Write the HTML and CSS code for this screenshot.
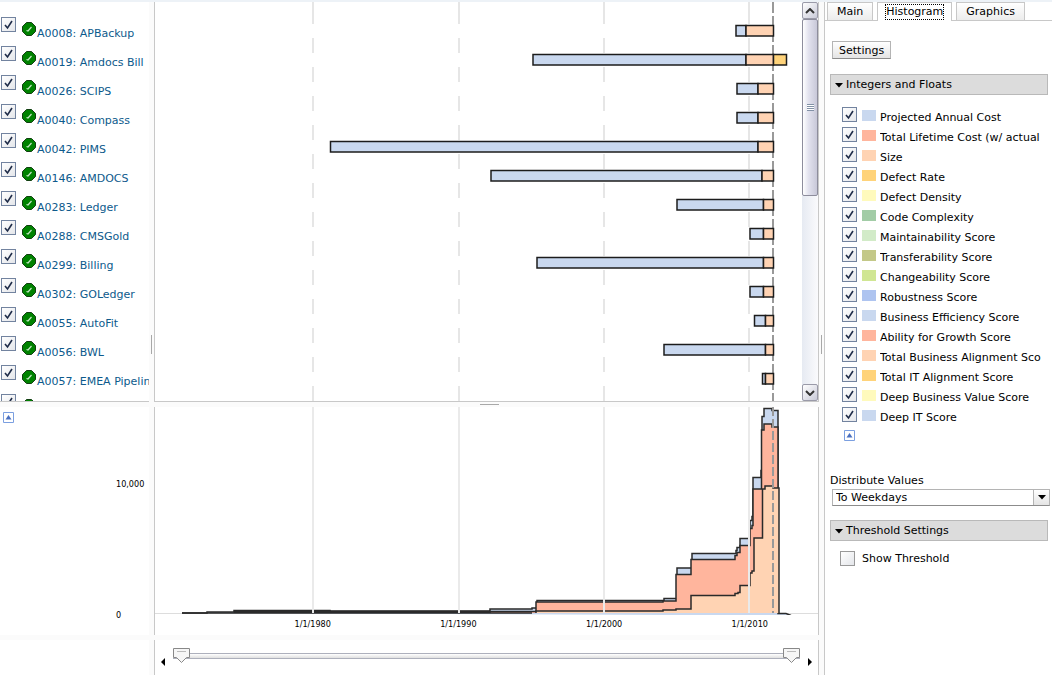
FILE: index.html
```
<!DOCTYPE html>
<html lang="en">
<head>
<meta charset="utf-8">
<title>Portfolio Timeline</title>
<link rel="stylesheet" href="styles.css">
</head>
<body>
<svg class="defs" aria-hidden="true">
  <symbol id="ok" viewBox="0 0 14 14">
    <path d="M4.500.5h5L13.500 4.500v5L9.500 13.500h-5L.5 9.500v-5z" fill="#008200" stroke="#123f12"/>
    <path d="M4.500 8.500l1.500.5L9.500 5" fill="none" stroke="#c4e6c4" stroke-width="1.200"/>
  </symbol>
  <symbol id="up" viewBox="0 0 11 11">
    <path d="M.5.5h10v10H.5z" fill="#fff" stroke="#7b9fe0"/>
    <path d="M5.500 3L8.500 7.500h-6z" fill="#4a70c0"/>
  </symbol>
  <symbol id="fold" viewBox="0 0 8 5"><path d="M0 0h8L4 4.500z" fill="#000"/></symbol>
</svg>
<div class="app">
  <main class="board">
    <ul class="apps pane">
      <li><input type="checkbox" checked aria-label="A0008"><svg class="ok"><use href="#ok"/></svg><a href="#">A0008: APBackup</a></li>
      <li><input type="checkbox" checked aria-label="A0019"><svg class="ok"><use href="#ok"/></svg><a href="#">A0019: Amdocs Bill</a></li>
      <li><input type="checkbox" checked aria-label="A0026"><svg class="ok"><use href="#ok"/></svg><a href="#">A0026: SCIPS</a></li>
      <li><input type="checkbox" checked aria-label="A0040"><svg class="ok"><use href="#ok"/></svg><a href="#">A0040: Compass</a></li>
      <li><input type="checkbox" checked aria-label="A0042"><svg class="ok"><use href="#ok"/></svg><a href="#">A0042: PIMS</a></li>
      <li><input type="checkbox" checked aria-label="A0146"><svg class="ok"><use href="#ok"/></svg><a href="#">A0146: AMDOCS</a></li>
      <li><input type="checkbox" checked aria-label="A0283"><svg class="ok"><use href="#ok"/></svg><a href="#">A0283: Ledger</a></li>
      <li><input type="checkbox" checked aria-label="A0288"><svg class="ok"><use href="#ok"/></svg><a href="#">A0288: CMSGold</a></li>
      <li><input type="checkbox" checked aria-label="A0299"><svg class="ok"><use href="#ok"/></svg><a href="#">A0299: Billing</a></li>
      <li><input type="checkbox" checked aria-label="A0302"><svg class="ok"><use href="#ok"/></svg><a href="#">A0302: GOLedger</a></li>
      <li><input type="checkbox" checked aria-label="A0055"><svg class="ok"><use href="#ok"/></svg><a href="#">A0055: AutoFit</a></li>
      <li><input type="checkbox" checked aria-label="A0056"><svg class="ok"><use href="#ok"/></svg><a href="#">A0056: BWL</a></li>
      <li><input type="checkbox" checked aria-label="A0057"><svg class="ok"><use href="#ok"/></svg><a href="#">A0057: EMEA Pipelin</a></li>
      <li><input type="checkbox" checked aria-label="Next application"><svg class="ok"><use href="#ok"/></svg></li>
    </ul>
    <div class="split-v"><i></i></div>
    <section class="gantt pane framed">
      <svg class="gantt-plot" viewBox="155 2 647 399" preserveAspectRatio="none">
        <g stroke="#e6e6e6" stroke-width="2">
          <path d="M313 2V24M459 2V24M604 2V24M749 2V24"/>
          <path d="M313 38V401M459 38V401M604 38V401M749 38V401" stroke-dasharray="15 14"/>
        </g>
        <path d="M773 2V401" stroke="#999" stroke-width="2" stroke-dasharray="26 3" stroke-dashoffset="15"/>
        <g stroke="#1c1c1c" stroke-width="1.500" fill="#c9d8ef">
          <path d="M736 25.500h10v10.500h-10zM533 54.500h213v10.500H533zM737 83.500h21v10.500h-21zM737 112.500h21v10.500h-21zM330.500 141.500H758v10.500H330.500zM491 170.500h271v10.500H491zM677 199.500h86.500v10.500H677zM750 228.500h13.500v10.500H750zM537 257.500h226.500v10.500H537zM750 286.500h13.500v10.500H750zM754.500 315.500h11v10.500h-11zM664 344.500h101.500v10.500H664zM762.500 373.500h3v10.500h-3z"/>
          <path fill="#ffd3b3" d="M746 25.500h27.500v10.500H746zM746 54.500h27.500v10.500H746zM758 83.500h15.500v10.500H758zM758 112.500h15.500v10.500H758zM758 141.500h15.500v10.500H758zM762 170.500h11.500v10.500H762zM763.500 199.500h10v10.500h-10zM763.500 228.500h10v10.500h-10zM763.500 257.500h10v10.500h-10zM763.500 286.500h10v10.500h-10zM765.500 315.500h8v10.500h-8zM765.500 344.500h8v10.500h-8zM765.500 373.500h8v10.500h-8z"/>
          <path fill="#ffd37a" d="M773.500 54.500h13v10.500h-13z"/>
        </g>
      </svg>
      <div class="scroll">
        <button class="scroll-btn" aria-label="Scroll up"><svg viewBox="0 0 10 6"><path d="M1 5l4-4 4 4" fill="none" stroke="#333" stroke-width="2"/></svg></button>
        <div class="scroll-thumb"><i></i></div>
        <button class="scroll-btn scroll-down" aria-label="Scroll down"><svg viewBox="0 0 10 6"><path d="M1 1l4 4 4-4" fill="none" stroke="#333" stroke-width="2"/></svg></button>
      </div>
    </section>
    <div class="split-v"><i></i></div>

    <div class="split-h"><i></i></div>

    <section class="scale">
      <button class="bare" aria-label="Collapse chart"><svg class="up"><use href="#up"/></svg></button>
      <div class="ticks"><span>10,000</span><span>0</span></div>
    </section>
    <div class="gutter"></div>
    <section class="histogram framed">
      <svg class="hist-plot" viewBox="155 407 663 208" preserveAspectRatio="none">
        <path d="M155 613.500H818" stroke="#ddd"/>
        <g stroke="#2a2a2a" stroke-width="1.500" stroke-linejoin="miter">
          <path fill="#c9d8ef" d="M182 613h25v-1h27v-1.500h96v.5h160v-2h42v-1h5v-7.500h127v-2h13v-30.500h15v-14.500h44v-3h1v-3h3v-9h10v-18h2v-4h1v-39h8v-7h1v-54h2v-8h8v2h6v203h8l5 2z" stroke="none"/>
          <path fill="none" d="M182 613h25v-1h27v-1.500h96v.5h160v-2h42v-1h5v-7.500h127v-2h13v-30.500h15v-14.500h44v-3h1v-3h3v-9h10v-18h2v-4h1v-39h8v-7h1v-54h2v-8h8v2h6v203h8l5 2"/>
          <path fill="#ffb59d" d="M490 613v-1.500h46v-9.500h127v-1h13v-26.500h15v-15h44v-4h2v-3h3v-7h10v-17h2v-3h1v-36.500h8.500V430h2.500v-6h8v3h6v186"/>
          <path fill="#ffd3b3" d="M536 613v-2h127v-1h13v-1h15v-13.500h44v-2h3v-1h2v-7h10V573h2v-2h2v-33h8.500V489h2.500v-3h8v2h6v125"/>
          <path d="M182 613h350M234 611.500h256" fill="none"/>
        </g>
        <path d="M313 407V613M459 407V613M604 407V613M749 407V613" stroke="#eaeaea" stroke-width="2"/>
        <path d="M773 407V613" stroke="#999" stroke-width="2" stroke-dasharray="9 3"/>
      </svg>
      <div class="dates"><span>1/1/1980</span><span>1/1/1990</span><span>1/1/2000</span><span>1/1/2010</span></div>
    </section>
    <div class="gutter"></div>

    <div class="gutter row-gap"></div>

    <div></div>
    <div class="gutter"></div>
    <section class="range framed">
      <button class="bare" aria-label="Earlier"><svg class="step" viewBox="0 0 4 8"><path d="M4 0v8L0 4z"/></svg></button>
      <div class="track">
        <input type="range" min="0" max="100" value="0" aria-label="Range start">
        <input type="range" min="0" max="100" value="100" aria-label="Range end">
      </div>
      <button class="bare" aria-label="Later"><svg class="step" viewBox="0 0 4 8"><path d="M0 0v8l4-4z"/></svg></button>
    </section>
    <div class="gutter"></div>
  </main>

  <aside class="side">
    <nav class="tabs">
      <button>Main</button><button class="active"><span>Histogram</span></button><button>Graphics</button>
    </nav>
    <button class="settings">Settings</button>
    <h2><svg class="fold"><use href="#fold"/></svg>Integers and Floats</h2>
    <div class="series">
      <label><input type="checkbox" checked><i class="blue"></i><span>Projected Annual Cost</span></label>
      <label><input type="checkbox" checked><i class="salmon"></i><span>Total Lifetime Cost (w/ actual</span></label>
      <label><input type="checkbox" checked><i class="peach"></i><span>Size</span></label>
      <label><input type="checkbox" checked><i class="gold"></i><span>Defect Rate</span></label>
      <label><input type="checkbox" checked><i class="lemon"></i><span>Defect Density</span></label>
      <label><input type="checkbox" checked><i class="green"></i><span>Code Complexity</span></label>
      <label><input type="checkbox" checked><i class="mint"></i><span>Maintainability Score</span></label>
      <label><input type="checkbox" checked><i class="olive"></i><span>Transferability Score</span></label>
      <label><input type="checkbox" checked><i class="lime"></i><span>Changeability Score</span></label>
      <label><input type="checkbox" checked><i class="azure"></i><span>Robustness Score</span></label>
      <label><input type="checkbox" checked><i class="blue"></i><span>Business Efficiency Score</span></label>
      <label><input type="checkbox" checked><i class="salmon"></i><span>Ability for Growth Score</span></label>
      <label><input type="checkbox" checked><i class="peach"></i><span>Total Business Alignment Sco</span></label>
      <label><input type="checkbox" checked><i class="gold"></i><span>Total IT Alignment Score</span></label>
      <label><input type="checkbox" checked><i class="lemon"></i><span>Deep Business Value Score</span></label>
      <label><input type="checkbox" checked><i class="blue"></i><span>Deep IT Score</span></label>
      <button class="bare" aria-label="Collapse list"><svg class="up"><use href="#up"/></svg></button>
    </div>
    <label class="caption" for="distribute">Distribute Values</label>
    <div class="combo">
      <select id="distribute"><option>To Weekdays</option></select>
      <span class="combo-arrow"><svg class="fold"><use href="#fold"/></svg></span>
    </div>
    <h2><svg class="fold"><use href="#fold"/></svg>Threshold Settings</h2>
    <label class="threshold"><input type="checkbox"><span>Show Threshold</span></label>
  </aside>
</div>
</body>
</html>
```
FILE: styles.css
```
* { box-sizing: border-box; }
body {
  margin: 0;
  background: #fff;
  color: #000;
  font: 11px/14px Verdana, "DejaVu Sans", sans-serif;
}
button, select { font: inherit; color: inherit; }
.defs { position: absolute; width: 0; height: 0; }
.app {
  display: flex;
  min-height: 100vh;
  border-top: 2px solid #edf2f7;
}
.board {
  flex: 1;
  min-width: 0;
  display: grid;
  grid-template-columns: 149px 5px minmax(0, 1fr) 5px;
  grid-template-rows: 400px 5px 228px 5px 1fr;
}
.pane { border-bottom: 1px solid #c8c8c8; overflow: hidden; }
.framed { border-left: 1px solid #c8c8c8; border-right: 1px solid #c8c8c8; }
.split-v, .split-h {
  background: #fbfbfb;
  display: flex;
  align-items: center;
  justify-content: center;
}
.split-v i { width: 1px; height: 19px; background: #a8a8a8; margin-top: 284px; }
.split-h { grid-column: 1 / -1; padding-left: 154px; }
.split-h i { width: 19px; height: 1px; background: #a8a8a8; }
.gutter { background: #fbfbfb; }
.row-gap { grid-column: 1 / -1; }

input[type="checkbox"] {
  appearance: none;
  flex: none;
  width: 15px;
  height: 15px;
  margin: 0;
  border: 1px solid #72839f;
  background: linear-gradient(135deg, #fff, #e4e6ea);
}
input[type="checkbox"]:checked {
  background: url("data:image/svg+xml,%3Csvg xmlns='http://www.w3.org/2000/svg' viewBox='0 0 13 13'%3E%3Cpath d='M3 7l2.500 3L10 3' fill='none' stroke='%231f2c48' stroke-width='1.600'/%3E%3C/svg%3E"), linear-gradient(135deg, #fff, #e4e6ea);
}

.apps { list-style: none; margin: 0; padding: 15px 0 0 1px; }
.apps li { display: flex; height: 29px; white-space: nowrap; overflow: hidden; }
.apps a { margin: 10px 0 0 1px; color: #0d5a8c; text-decoration: none; }
.ok { flex: none; width: 14px; height: 14px; margin: 5px 0 0 6px; }

.gantt { display: flex; }
.gantt-plot { flex: 1; min-width: 0; height: 399px; }
.scroll {
  width: 16px;
  display: flex;
  flex-direction: column;
  background: linear-gradient(90deg, #e6eaf2, #fafafc);
}
.scroll-btn {
  height: 17px;
  padding: 0;
  border: 1px solid #9a9aa8;
  border-radius: 2px;
  background: linear-gradient(135deg, #fff, #c9cad8);
  display: flex;
  align-items: center;
  justify-content: center;
}
.scroll-btn svg { width: 10px; height: 6px; }
.scroll-down { margin-top: auto; }
.scroll-thumb {
  height: 177px;
  border: 1px solid #8d8d9c;
  border-radius: 2px;
  background: linear-gradient(90deg, #fff, #e2e2ee 40%, #c8c8d8);
  display: flex;
  align-items: center;
  justify-content: center;
}
.scroll-thumb i {
  width: 7px;
  height: 7px;
  background: repeating-linear-gradient(#8291a6 0 1px, #fff 1px 2px);
}

.bare { padding: 0; border: 0; background: none; display: block; }
.up { display: block; width: 11px; height: 11px; }
.scale { display: flex; align-items: flex-start; padding: 5px 0 0 3px; }
.ticks {
  margin-left: 102px;
  padding-top: 67px;
  height: 208px;
  display: flex;
  flex-direction: column;
  justify-content: space-between;
}
.ticks, .dates { font: 9px/10px Tahoma, "DejaVu Sans Condensed", "DejaVu Sans", sans-serif; }
.hist-plot { display: block; width: 100%; height: 208px; }
.dates {
  display: grid;
  grid-template-columns: repeat(4, 25.2%);
  padding: 4px 0 0 12.8%;
  text-align: center;
}

.range { display: flex; align-items: flex-start; padding: 0 6px; }
.range .bare { margin-top: 18px; }
.step { display: block; width: 4px; height: 8px; }
.track {
  flex: 1;
  display: grid;
  margin: 13px 8px 0;
  height: 6px;
  border: 1px solid #adb0bc;
  border-width: 1px 0;
  background: linear-gradient(#fff, #e0e0e0);
}
.track input {
  grid-area: 1 / 1;
  appearance: none;
  width: 100%;
  height: 16px;
  margin: -6px 0 0;
  background: none;
  pointer-events: none;
}
.track input::-webkit-slider-thumb {
  appearance: none;
  pointer-events: auto;
  width: 17px;
  height: 16px;
  background: url("data:image/svg+xml,%3Csvg xmlns='http://www.w3.org/2000/svg' viewBox='0 0 17 16'%3E%3Cpath d='M.5.5h16v9h-3L8.500 14.500 3.500 9.500h-3z' fill='%23f6f6f6' stroke='%23888'/%3E%3Cpath d='M4 3.500h9' stroke='%23bbb'/%3E%3C/svg%3E");
}

.side {
  width: 228px;
  border-left: 1px solid #c8c8c8;
  overflow: hidden;
}
.tabs {
  display: flex;
  gap: 4px;
  padding-left: 2px;
  border-bottom: 1px solid #c8c8c8;
}
.tabs button {
  height: 18px;
  padding: 1px 9px 0;
  border: 1px solid #c8c8c8;
  border-bottom: 0;
  background: linear-gradient(#fff, #ececec);
}
.tabs .active { height: 19px; margin-bottom: -1px; padding: 0 8px; background: #fff; }
.tabs .active span { display: block; outline: 1px dotted #000; line-height: 14px; }
.settings {
  display: block;
  height: 18px;
  margin: 20px 0 15px 7px;
  padding: 1px 6px 0;
  border: 1px solid #b4b4b4;
  border-bottom-color: #8c8c8c;
  background: linear-gradient(#fff, #e4e4e4);
  line-height: 14px;
}
.side h2 {
  display: flex;
  align-items: center;
  gap: 3px;
  height: 21px;
  margin: 0 4px 0 5px;
  padding: 1px 4px 0;
  border: 1px solid #b9b9b9;
  background: #dcdcdc;
  font: inherit;
}
.fold { width: 8px; height: 5px; }
.series { padding: 12px 4px 0 17px; }
.series label { display: flex; height: 20px; }
.series i { flex: none; width: 14px; height: 11px; margin: 3px 4px 0 5px; }
.series span { flex: 1; min-width: 0; margin-top: 4px; overflow: hidden; white-space: nowrap; }
.series .bare { margin: 3px 0 0 2px; }
.blue { background: #c9d8ef; }
.salmon { background: #ffb59d; }
.peach { background: #ffd3b3; }
.gold { background: #ffd37a; }
.lemon { background: #fffabd; }
.green { background: #a2cca6; }
.mint { background: #d2ebc8; }
.olive { background: #c3c888; }
.lime { background: #d0e693; }
.azure { background: #aec4f0; }
.caption { display: block; margin: 33px 0 1px 5px; }
.combo { position: relative; margin: 0 2px 14px 7px; }
.combo select {
  display: block;
  width: 100%;
  height: 17px;
  padding: 1px 3px 0;
  border: 1px solid #b4b4b4;
  border-bottom-color: #8c8c8c;
  border-radius: 0;
  appearance: none;
  background: #fff;
}
.combo-arrow {
  position: absolute;
  top: 1px;
  right: 1px;
  width: 16px;
  height: 15px;
  border-left: 1px solid #b4b4b4;
  background: linear-gradient(#fff, #e4e4e4);
  display: flex;
  align-items: center;
  justify-content: center;
  pointer-events: none;
}
.threshold { display: flex; gap: 7px; margin: 10px 0 0 15px; }
.threshold span { margin-top: 1px; }
.threshold input[type="checkbox"] { border-color: #999; }
```
